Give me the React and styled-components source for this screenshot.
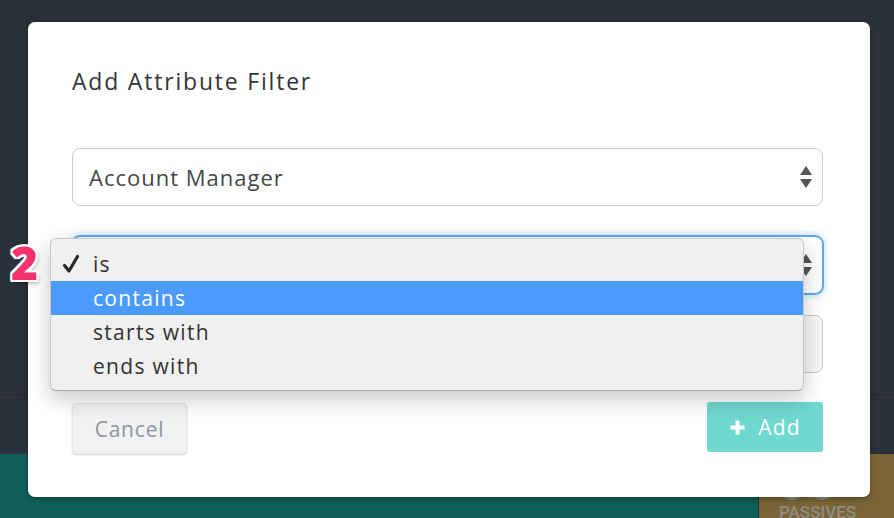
import React from "react";
import styled, { createGlobalStyle } from "styled-components";

const GlobalStyle = createGlobalStyle`
  html, body {
    margin: 0;
    padding: 0;
    width: 894px;
    height: 518px;
    overflow: hidden;
    background: #2b313b;
    font-family: "Open Sans", "Lato", sans-serif;
  }
  * { box-sizing: border-box; }
`;

const Page = styled.div`
  position: relative;
  width: 894px;
  height: 518px;
  display: flex;
  flex-direction: column;
  background: #2b313b;
  overflow: hidden;
`;

const TopArea = styled.div`
  flex-shrink: 0;
  height: 395px;
  border-bottom: 1px solid #232830;
`;

const MidArea = styled.div`
  flex-shrink: 0;
  height: 59px;
`;

const BottomRow = styled.div`
  flex: 1;
  min-height: 0;
  display: flex;
`;

const TealPanel = styled.div`
  width: 759px;
  background: #0e5f58;
  border-right: 1px solid #232830;
`;

const BrownPanel = styled.div`
  flex: 1;
  background: #7b6537;
  display: flex;
  flex-direction: column;
  align-items: flex-start;
  padding: 16px 0 0 20px;
`;

const Dots = styled.div`
  display: flex;
  gap: 4px;
`;

const Dot = styled.span`
  width: 26px;
  height: 30px;
  border-radius: 50%;
  border: 3px solid #8c8a86;
`;

const PanelLabel = styled.div`
  margin-top: 2px;
  font-family: "Roboto", "Liberation Sans", sans-serif;
  font-weight: 500;
  font-size: 17px;
  line-height: 20px;
  color: #8f8c86;
`;

const Modal = styled.div`
  position: absolute;
  left: 28px;
  top: 22px;
  width: 842px;
  height: 475px;
  background: #ffffff;
  border-radius: 7px;
  box-shadow: 0 2px 6px rgba(0, 0, 0, 0.3);
  padding: 44px 47px 0 44px;
  display: flex;
  flex-direction: column;
`;

const Title = styled.h1`
  margin: 0;
  font-size: 23px;
  line-height: 30px;
  font-weight: 400;
  letter-spacing: 1.8px;
  color: #333538;
`;

const Fields = styled.div`
  margin-top: 52px;
  display: flex;
  flex-direction: column;
`;

const FieldWrap = styled.div`
  position: relative;
  z-index: ${(p) => (p.$open ? 2 : 1)};
  margin-top: ${(p) => p.$gap || 0}px;
`;

const Field = styled.div`
  height: 58px;
  border: 1px solid ${(p) => (p.$focused ? "#5ea8f2" : "#cccccc")};
  border-radius: 8px;
  display: flex;
  align-items: center;
  padding: 0 10px 0 16px;
  font-size: 22px;
  letter-spacing: 1px;
  color: #444649;
  background: ${(p) => (p.$muted ? "#f7f7f7" : "#ffffff")};
  box-shadow: ${(p) =>
    p.$focused
      ? "0 0 0 1px #5ea8f2, 0 0 6px 2px rgba(94,168,242,0.35)"
      : "none"};
`;

const FieldText = styled.span`
  flex: 1;
`;

const Arrows = styled.div`
  display: flex;
  flex-direction: column;
  gap: 4px;
`;

const Tri = styled.span`
  width: 0;
  height: 0;
  border-left: 6px solid transparent;
  border-right: 6px solid transparent;
  ${(p) =>
    p.$down
      ? "border-top: 9px solid #555;"
      : "border-bottom: 9px solid #555;"}
`;

const Menu = styled.ul`
  position: absolute;
  left: -22px;
  top: 2px;
  width: 754px;
  margin: 0;
  padding: 8px 0 7px;
  list-style: none;
  background: #f0f0f0;
  border: 1px solid #c8c8c8;
  border-bottom-color: #a8a8a8;
  border-radius: 6px;
  box-shadow: 0 8px 22px rgba(0, 0, 0, 0.22);
  overflow: hidden;
`;

const MenuItem = styled.li`
  position: relative;
  height: 34px;
  display: flex;
  align-items: center;
  padding-left: 42px;
  font-size: 21px;
  letter-spacing: 1.3px;
  color: ${(p) => (p.$active ? "#ffffff" : "#333333")};
  background: ${(p) => (p.$active ? "#4b9bff" : "transparent")};
`;

const Check = styled.svg`
  position: absolute;
  left: 11px;
  top: 7px;
`;

const Badge = styled.div`
  position: absolute;
  left: -61px;
  top: 3px;
  font-family: "Open Sans", "DejaVu Sans", sans-serif;
  font-weight: 800;
  font-size: 46px;
  line-height: 46px;
  color: #f4336c;
  text-shadow: 2px 0 #fff, -2px 0 #fff, 0 2px #fff, 0 -2px #fff,
    2px 2px #fff, -2px -2px #fff, 2px -2px #fff, -2px 2px #fff,
    2px 3px 4px rgba(0, 0, 0, 0.35);
`;

const Actions = styled.div`
  margin-top: 29px;
  display: flex;
  justify-content: space-between;
  align-items: flex-start;
`;

const CancelButton = styled.button`
  width: 115px;
  height: 51px;
  margin-top: 1px;
  border: 1px solid #e3e5e8;
  border-radius: 4px;
  background: #f1f2f4;
  box-shadow: 0 1px 2px rgba(0, 0, 0, 0.18);
  font-family: inherit;
  font-size: 21px;
  letter-spacing: 0.8px;
  color: #8e959d;
`;

const AddButton = styled.button`
  width: 116px;
  height: 50px;
  border: none;
  border-radius: 3px;
  background: #6fd8cf;
  display: flex;
  align-items: center;
  justify-content: center;
  gap: 12px;
  font-family: inherit;
  font-size: 21px;
  letter-spacing: 1.2px;
  color: #ffffff;
`;

const options = ["is", "contains", "starts with", "ends with"];

function SelectArrows() {
  return (
    <Arrows>
      <Tri />
      <Tri $down />
    </Arrows>
  );
}

export default function App() {
  return (
    <>
      <GlobalStyle />
      <Page>
        <TopArea />
        <MidArea />
        <BottomRow>
          <TealPanel />
          <BrownPanel>
            <Dots>
              <Dot />
              <Dot />
            </Dots>
            <PanelLabel>PASSIVES</PanelLabel>
          </BrownPanel>
        </BottomRow>

        <Modal>
          <Title>Add Attribute Filter</Title>
          <Fields>
            <FieldWrap>
              <Field>
                <FieldText>Account Manager</FieldText>
                <SelectArrows />
              </Field>
            </FieldWrap>
            <FieldWrap $gap={30} $open>
              <Field $focused>
                <FieldText>is</FieldText>
                <SelectArrows />
              </Field>
              <Badge>2</Badge>
              <Menu>
                {options.map((o, i) => (
                  <MenuItem key={o} $active={i === 1}>
                    {i === 0 && (
                      <Check width="18" height="20" viewBox="0 0 18 20">
                        <path
                          d="M2.5 11.5 L7 17 L15.5 2.5"
                          fill="none"
                          stroke="#2a2a2a"
                          strokeWidth="3.2"
                          strokeLinecap="round"
                          strokeLinejoin="round"
                        />
                      </Check>
                    )}
                    {o}
                  </MenuItem>
                ))}
              </Menu>
            </FieldWrap>
            <FieldWrap $gap={21}>
              <Field $muted>
                <FieldText />
              </Field>
            </FieldWrap>
          </Fields>
          <Actions>
            <CancelButton>Cancel</CancelButton>
            <AddButton>
              <svg width="17" height="17" viewBox="0 0 17 17">
                <path d="M8.5 1.5 V15.5 M1.5 8.5 H15.5" stroke="#fff" strokeWidth="4" />
              </svg>
              Add
            </AddButton>
          </Actions>
        </Modal>
      </Page>
    </>
  );
}
